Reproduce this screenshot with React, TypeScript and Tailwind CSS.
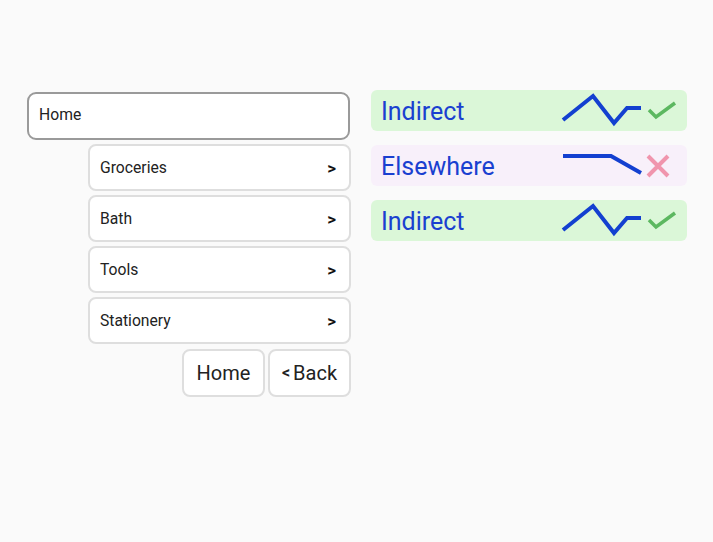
import React from "react";

const items = ["Groceries", "Bath", "Tools", "Stationery"];

function UpSpark() {
  return (
    <svg width="120" height="41" viewBox="0 0 120 41" className="shrink-0">
      <polyline points="3,30 33,6 54,33 67,18 81,18" fill="none" stroke="#1340d0" strokeWidth="4" strokeLinejoin="miter" />
      <polyline points="89,20 96,27 115,13" fill="none" stroke="#5cb860" strokeWidth="3.5" />
    </svg>
  );
}

function DownSpark() {
  return (
    <svg width="120" height="41" viewBox="0 0 120 41" className="shrink-0">
      <polyline points="3,11 51,11 81,28" fill="none" stroke="#1340d0" strokeWidth="4" />
      <path d="M88,11 L108,31 M108,11 L88,31" stroke="#f095ad" strokeWidth="4" />
    </svg>
  );
}

export default function App() {
  return (
    <div
      className="min-h-[542px] w-full bg-[#fafafa] pt-[90px] pl-[27px] flex gap-[20px]"
      style={{ fontFamily: "Roboto, 'Noto Sans', sans-serif" }}
    >
      <div className="w-[324px] flex flex-col pt-[2px]">
        <div className="h-[48px] w-[323px] border-2 border-[#9a9a9a] rounded-[9px] bg-white flex items-center pl-[10px] pb-[3px] text-[15.7px] text-[#222]">
          Home
        </div>
        <div className="ml-[61px] mt-[4px] flex flex-col gap-[4px]">
          {items.map((it) => (
            <div
              key={it}
              className="h-[47px] w-[263px] border-2 border-[#dedede] rounded-[8px] bg-white flex items-center justify-between pl-[10px] pr-[13px] text-[15.7px] text-[#222]"
            >
              <span>{it}</span>
              <span className="font-bold text-[17px] text-[#111] pt-[3px]">&gt;</span>
            </div>
          ))}
        </div>
        <div className="flex justify-end gap-[3px] mt-[5px] pr-[0px]">
          <div className="h-[48px] w-[83px] border-2 border-[#dedede] rounded-[8px] bg-white flex items-center justify-center text-[20px] text-[#222]">
            Home
          </div>
          <div className="h-[48px] w-[83px] border-2 border-[#dedede] rounded-[8px] bg-white flex items-center justify-center text-[20px] text-[#222]">
            <span className="text-[16px] font-bold mr-[3px]">&lt;</span>Back
          </div>
        </div>
      </div>
      <div className="w-[316px] flex flex-col gap-[14px]">
        <div className="h-[41px] rounded-[6px] bg-[#dbf7d8] flex items-center justify-between pl-[10px] pr-[7px]">
          <span className="text-[25px] text-[#1a40d0] pt-[3px]">Indirect</span>
          <UpSpark />
        </div>
        <div className="h-[41px] rounded-[6px] bg-[#f8f0fa] flex items-center justify-between pl-[10px] pr-[7px]">
          <span className="text-[25px] text-[#1a40d0] pt-[3px]">Elsewhere</span>
          <DownSpark />
        </div>
        <div className="h-[41px] rounded-[6px] bg-[#dbf7d8] flex items-center justify-between pl-[10px] pr-[7px]">
          <span className="text-[25px] text-[#1a40d0] pt-[3px]">Indirect</span>
          <UpSpark />
        </div>
      </div>
    </div>
  );
}
